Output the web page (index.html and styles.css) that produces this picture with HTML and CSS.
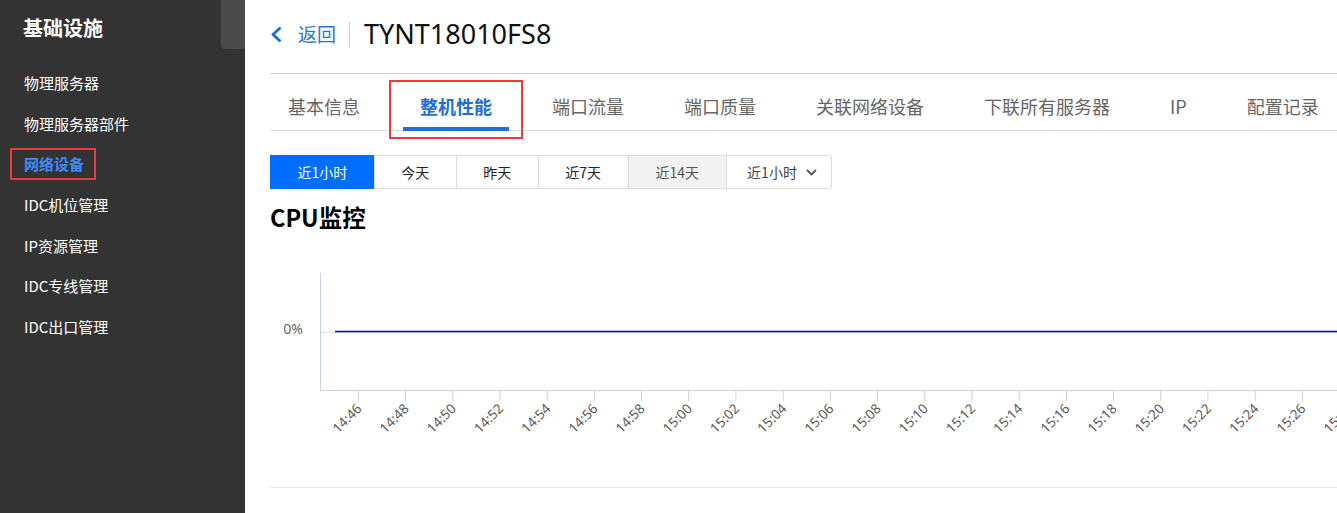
FILE: index.html
```html
<!DOCTYPE html>
<html lang="zh-CN">
<head>
<meta charset="utf-8">
<title>TYNT18010FS8</title>
<link rel="stylesheet" href="styles.css">
</head>
<body>
<div class="app">
  <aside class="sidebar">
    <div class="thumb"></div>
    <h1 class="brand">基础设施</h1>
    <ul class="menu">
      <li class="menu-item">物理服务器</li>
      <li class="menu-item">物理服务器部件</li>
      <li class="menu-item active"><span class="mark">网络设备</span></li>
      <li class="menu-item">IDC机位管理</li>
      <li class="menu-item">IP资源管理</li>
      <li class="menu-item">IDC专线管理</li>
      <li class="menu-item">IDC出口管理</li>
    </ul>
  </aside>
  <main class="main">
    <header class="header">
      <svg class="chev" width="12" height="15" viewBox="0 0 12 15"><path d="M9.5 1.5 L3 7.5 L9.5 13.5" fill="none" stroke="#1f6fd4" stroke-width="3" stroke-linecap="round" stroke-linejoin="round"/></svg>
      <a class="back">返回</a>
      <span class="sep"></span>
      <span class="title">TYNT18010FS8</span>
    </header>
    <nav class="tabs">
      <span class="tab">基本信息</span>
      <span class="tab active">整机性能</span>
      <span class="tab">端口流量</span>
      <span class="tab">端口质量</span>
      <span class="tab">关联网络设备</span>
      <span class="tab">下联所有服务器</span>
      <span class="tab">IP</span>
      <span class="tab">配置记录</span>
    </nav>
    <div class="ranges">
      <span class="rbtn on">近1小时</span>
      <span class="rbtn">今天</span>
      <span class="rbtn">昨天</span>
      <span class="rbtn">近7天</span>
      <span class="rbtn hover">近14天</span>
      <span class="rbtn select">近1小时<svg class="caret" width="11" height="7" viewBox="0 0 11 7"><path d="M1 1 L5.5 5.5 L10 1" fill="none" stroke="#555" stroke-width="1.8"/></svg></span>
    </div>
    <h2 class="section-title">CPU监控</h2>
    <svg class="chart" width="1067" height="247" viewBox="0 0 1067 247">
      <line x1="51" y1="92.5" x2="1067" y2="92.5" stroke="#e2e2e2" stroke-width="1"/>
      <line x1="50.5" y1="33" x2="50.5" y2="151" stroke="#c7d3e5" stroke-width="1"/>
      <line x1="50" y1="150.5" x2="1067" y2="150.5" stroke="#c7d3e5" stroke-width="1"/>
      <line x1="65" y1="91.5" x2="1067" y2="91.5" stroke="#0000ee" stroke-width="1.6"/>
      <text class="ylab" x="33" y="90" text-anchor="end" dominant-baseline="middle">0%</text>
      <g class="ticks" stroke="#c7d3e5" stroke-width="1">
        <line x1="88.3" y1="150" x2="88.3" y2="161"/>
        <line x1="135.5" y1="150" x2="135.5" y2="161"/>
        <line x1="182.7" y1="150" x2="182.7" y2="161"/>
        <line x1="229.9" y1="150" x2="229.9" y2="161"/>
        <line x1="277.1" y1="150" x2="277.1" y2="161"/>
        <line x1="324.3" y1="150" x2="324.3" y2="161"/>
        <line x1="371.5" y1="150" x2="371.5" y2="161"/>
        <line x1="418.7" y1="150" x2="418.7" y2="161"/>
        <line x1="465.9" y1="150" x2="465.9" y2="161"/>
        <line x1="513.1" y1="150" x2="513.1" y2="161"/>
        <line x1="560.3" y1="150" x2="560.3" y2="161"/>
        <line x1="607.5" y1="150" x2="607.5" y2="161"/>
        <line x1="654.7" y1="150" x2="654.7" y2="161"/>
        <line x1="701.9" y1="150" x2="701.9" y2="161"/>
        <line x1="749.1" y1="150" x2="749.1" y2="161"/>
        <line x1="796.3" y1="150" x2="796.3" y2="161"/>
        <line x1="843.5" y1="150" x2="843.5" y2="161"/>
        <line x1="890.7" y1="150" x2="890.7" y2="161"/>
        <line x1="937.9" y1="150" x2="937.9" y2="161"/>
        <line x1="985.1" y1="150" x2="985.1" y2="161"/>
        <line x1="1032.3" y1="150" x2="1032.3" y2="161"/>
      </g>
      <g class="xlab" text-anchor="end" dominant-baseline="middle">
        <text x="90" y="167" transform="rotate(-45 90 167)">14:46</text>
        <text x="137.2" y="167" transform="rotate(-45 137.2 167)">14:48</text>
        <text x="184.4" y="167" transform="rotate(-45 184.4 167)">14:50</text>
        <text x="231.6" y="167" transform="rotate(-45 231.6 167)">14:52</text>
        <text x="278.8" y="167" transform="rotate(-45 278.8 167)">14:54</text>
        <text x="326" y="167" transform="rotate(-45 326 167)">14:56</text>
        <text x="373.2" y="167" transform="rotate(-45 373.2 167)">14:58</text>
        <text x="420.4" y="167" transform="rotate(-45 420.4 167)">15:00</text>
        <text x="467.6" y="167" transform="rotate(-45 467.6 167)">15:02</text>
        <text x="514.8" y="167" transform="rotate(-45 514.8 167)">15:04</text>
        <text x="562" y="167" transform="rotate(-45 562 167)">15:06</text>
        <text x="609.2" y="167" transform="rotate(-45 609.2 167)">15:08</text>
        <text x="656.4" y="167" transform="rotate(-45 656.4 167)">15:10</text>
        <text x="703.6" y="167" transform="rotate(-45 703.6 167)">15:12</text>
        <text x="750.8" y="167" transform="rotate(-45 750.8 167)">15:14</text>
        <text x="798" y="167" transform="rotate(-45 798 167)">15:16</text>
        <text x="845.2" y="167" transform="rotate(-45 845.2 167)">15:18</text>
        <text x="892.4" y="167" transform="rotate(-45 892.4 167)">15:20</text>
        <text x="939.6" y="167" transform="rotate(-45 939.6 167)">15:22</text>
        <text x="986.8" y="167" transform="rotate(-45 986.8 167)">15:24</text>
        <text x="1034" y="167" transform="rotate(-45 1034 167)">15:26</text>
        <text x="1081.2" y="167" transform="rotate(-45 1081.2 167)">15:28</text>
      </g>
    </svg>
    <div class="rule"></div>
  </main>
</div>
</body>
</html>
```

FILE: styles.css
```css
* { box-sizing: border-box; }
html, body { margin: 0; padding: 0; }
body {
  width: 1337px;
  height: 513px;
  overflow: hidden;
  background: #fff;
  font-family: "Noto Sans CJK SC", "Noto Sans", sans-serif;
  color: #333;
}
.app {
  display: flex;
  height: 513px;
}
.sidebar {
  position: relative;
  width: 245px;
  flex: 0 0 245px;
  background: #333333;
  color: #fff;
}
.thumb {
  position: absolute;
  top: 0;
  right: 0;
  width: 24px;
  height: 49px;
  background: #4a4a4a;
  border-bottom-left-radius: 4px;
}
.brand {
  margin: 14px 0 0 23px;
  font-size: 20px;
  line-height: 28px;
  font-weight: 700;
  color: #fff;
}
.menu {
  list-style: none;
  margin: 20px 0 0;
  padding: 0;
}
.menu-item {
  display: flex;
  align-items: center;
  height: 40.7px;
  padding-left: 24px;
  font-size: 15px;
  font-weight: 400;
  color: #fff;
}
.menu-item.active { color: #3d8bff; }
.mark {
  display: inline-block;
  margin-left: -14px;
  padding: 0 10px 0 12px;
  height: 32px;
  line-height: 28px;
  border: 2px solid #ee3a3a;
  font-weight: 700;
}
.main {
  flex: 1;
  min-width: 0;
  padding-left: 25px;
  overflow: hidden;
}
.header {
  display: flex;
  align-items: center;
  height: 74px;
  padding-bottom: 5px;
  border-bottom: 1px solid #cccccc;
}
.chev { display: block; margin-right: 16px; }
.back {
  font-size: 19px;
  color: #2b77d4;
  line-height: 26px;
}
.sep {
  width: 1px;
  height: 25px;
  background: #cfcfcf;
  margin: 0 14px 0 13px;
}
.title {
  font-family: "Noto Sans", sans-serif;
  font-size: 27px;
  line-height: 32px;
  color: #111;
}
.tabs {
  display: flex;
  align-items: flex-start;
  gap: 26px;
  height: 57px;
  padding-left: 1px;
  border-bottom: 1px solid #dddddd;
  white-space: nowrap;
}
.tab {
  position: relative;
  flex: 0 0 auto;
  height: 57px;
  padding: 20px 17px 0;
  font-size: 18px;
  line-height: 24px;
  color: #666;
  border-bottom: 4px solid transparent;
}
.tab.active {
  color: #1f6fd6;
  font-weight: 700;
  border-bottom-color: #1f6fd6;
}
.tab.active::after {
  content: "";
  position: absolute;
  left: -14px;
  right: -14px;
  top: 6px;
  bottom: -12px;
  border: 2px solid #ee3a3a;
}
.ranges {
  display: flex;
  margin-top: 24px;
  height: 34px;
}
.rbtn {
  display: flex;
  align-items: center;
  height: 34px;
  padding: 0 26.5px;
  margin-left: -1px;
  border: 1px solid #dcdcdc;
  font-size: 14px;
  color: #222;
  background: #fff;
  white-space: nowrap;
}
.rbtn:first-child { margin-left: 0; }
.rbtn.on {
  background: #006eff;
  border-color: #006eff;
  color: #fff;
}
.rbtn.hover {
  background: #f2f2f2;
  color: #555;
  padding: 0 27px;
}
.rbtn.select {
  padding: 0 14px 0 20px;
  color: #444;
  border-radius: 0 3px 3px 0;
}
.caret { display: block; margin-left: 9px; }
.section-title {
  margin: 13px 0 0;
  font-size: 23.5px;
  line-height: 30px;
  font-weight: 700;
  color: #000;
}
.chart {
  display: block;
  margin-top: 8px;
}
.ylab {
  font-family: "Noto Sans", sans-serif;
  font-size: 14px;
  fill: #666;
}
.xlab text {
  font-family: "Noto Sans", sans-serif;
  font-size: 13.5px;
  fill: #5a5a5a;
}
.rule {
  border-top: 1px solid #e6e6e6;
}
```
